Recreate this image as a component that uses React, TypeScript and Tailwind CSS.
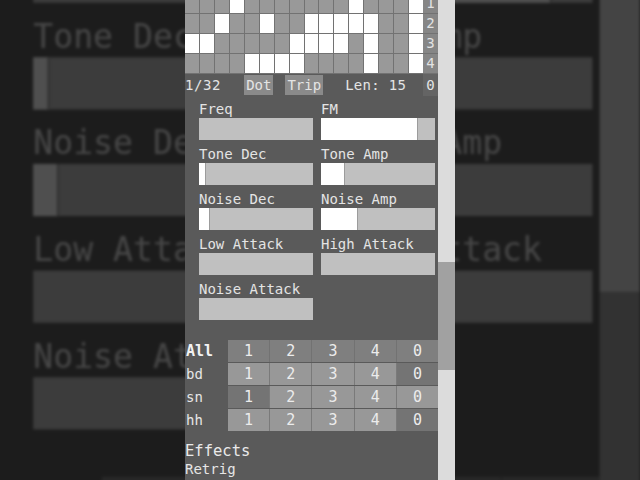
import React from 'react';

const mono = { fontFamily: '"DejaVu Sans Mono", "Liberation Mono", monospace' };

// white cells per step row (16 steps)
const steps: number[][] = [
  [3, 11, 15],
  [2, 5, 8, 9, 10, 11, 12, 15],
  [0, 1, 7, 8, 9, 10, 12, 15],
  [4, 5, 6, 7, 12, 15],
];

const sliders = [
  { label: 'Freq', fill: 0 },
  { label: 'FM', fill: 97 },
  { label: 'Tone Dec', fill: 7 },
  { label: 'Tone Amp', fill: 24 },
  { label: 'Noise Dec', fill: 11 },
  { label: 'Noise Amp', fill: 37 },
  { label: 'Low Attack', fill: 0 },
  { label: 'High Attack', fill: 0 },
  { label: 'Noise Attack', fill: 0 },
];

const tracks = [
  { name: 'bd', on: [true, true, true, true, false] },
  { name: 'sn', on: [false, true, true, true, true] },
  { name: 'hh', on: [true, true, true, true, false] },
];

const nums = ['1', '2', '3', '4', '0'];

function Slider({ label, fill }: { label: string; fill: number }) {
  return (
    <div className="flex flex-col h-[45px]">
      <div className="h-[17px] leading-[17px] text-[14px] text-[#e4e4e4] whitespace-nowrap">{label}</div>
      <div className="h-[22px] bg-[#c0c0c0] flex">
        {fill > 0 && <div className="h-full bg-white border-r border-[#9c9c9c]" style={{ width: fill }} />}
      </div>
    </div>
  );
}

function Panel() {
  return (
    <div className="w-[270px] h-[480px] bg-[#5a5a5a] flex overflow-hidden" style={mono}>
      <div className="w-[253px] flex flex-col">
        {/* step grid */}
        <div className="flex -mt-[6px]">
          <div className="w-[238px] grid grid-cols-16 auto-rows-[19px] gap-px pb-px bg-[#727272]">
            {steps.map((row, r) =>
              Array.from({ length: 16 }, (_, c) => (
                <div key={`${r}-${c}`} className={row.includes(c) ? 'bg-white' : 'bg-[#999999]'} />
              ))
            )}
          </div>
          <div className="w-[15px] grid auto-rows-[19px] gap-px pb-px bg-[#727272]">
            {['1', '2', '3', '4'].map((n) => (
              <div key={n} className="bg-[#868686] text-[14px] leading-[19px] text-[#e2e2e2] text-center">{n}</div>
            ))}
          </div>
        </div>

        <div className="h-[22px] flex items-center text-[14px] text-[#e4e4e4] whitespace-nowrap">
          <span className="tracking-[0.6px]">1/32</span>
          <span className="ml-[23px] px-[2px] h-[20px] leading-[20px] bg-[#8a8a8a]">Dot</span>
          <span className="ml-[12px] px-[2px] h-[20px] leading-[20px] bg-[#8a8a8a]">Trip</span>
          <span className="ml-[22px] tracking-[0.3px]">Len: 15</span>
          <span className="ml-auto w-[15px] h-[22px] leading-[22px] text-center bg-[#646464]">0</span>
        </div>

        {/* sliders */}
        <div className="pt-[5px] pl-[14px] pr-[3px] grid grid-cols-2 gap-x-[8px]">
          {sliders.map((s) => (
            <Slider key={s.label} label={s.label} fill={s.fill} />
          ))}
        </div>

        {/* track table */}
        <div className="mt-[14px] flex flex-col gap-px">
          <div className="flex h-[22px]">
            <div className="w-[43px] pl-px text-[15px] font-bold leading-[22px] text-[#f2f2f2]">All</div>
            <div className="flex-1 grid grid-cols-5 gap-px bg-[#727272]">
              {nums.map((n) => (
                <div key={n} className="bg-[#7f7f7f] text-center text-[15px] leading-[22px] text-[#ececec]">{n}</div>
              ))}
            </div>
          </div>
          {tracks.map((t) => (
            <div key={t.name} className="flex h-[22px]">
              <div className="w-[43px] pl-px text-[14px] leading-[22px] text-[#e6e6e6]">{t.name}</div>
              <div className="flex-1 grid grid-cols-5 gap-px bg-[#7a7a7a]">
                {nums.map((n, i) => (
                  <div
                    key={n}
                    className={`${t.on[i] ? 'bg-[#989898]' : 'bg-[#747474]'} text-center text-[15px] leading-[22px] text-[#ececec]`}
                  >
                    {n}
                  </div>
                ))}
              </div>
            </div>
          ))}
        </div>

        <div className="mt-[10px] text-[15.5px] leading-[20px] text-[#eaeaea]">Effects</div>
        <div className="text-[14px] leading-[17px] text-[#e6e6e6]">Retrig</div>
      </div>

      {/* scrollbar */}
      <div className="w-[17px] flex flex-col">
        <div className="h-[262px] bg-[#dcdcdc]" />
        <div className="h-[108px] bg-[#a1a1a1]" />
        <div className="flex-1 bg-[#dcdcdc]" />
      </div>
    </div>
  );
}

export default function App() {
  return (
    <div className="relative w-[640px] h-[480px] overflow-hidden bg-[#1c1c1c] flex justify-center">
      {/* blurred, darkened backdrop: the same screen blown up */}
      <div className="absolute left-0 top-0 origin-top-left scale-[2.37] -translate-y-[329px] brightness-[0.31] blur-[0.6px]">
        <Panel />
      </div>
      <div className="relative">
        <Panel />
      </div>
    </div>
  );
}
